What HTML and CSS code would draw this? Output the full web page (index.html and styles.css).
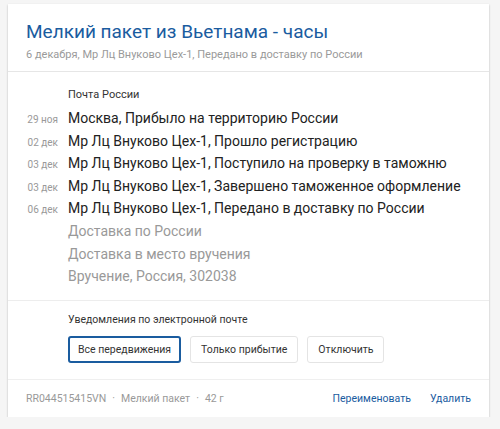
FILE: index.html
```html
<!DOCTYPE html>
<html lang="ru">
<head>
<meta charset="utf-8">
<link rel="stylesheet" href="styles.css">
</head>
<body>
<div class="card">
  <header class="head">
    <h1 class="title">Мелкий пакет из Вьетнама - часы</h1>
    <div class="sub">6 декабря, Мр Лц Внуково Цех-1, Передано в доставку по России</div>
  </header>
  <section class="track">
    <div class="carrier">Почта России</div>
    <ul class="events">
      <li class="ev"><span class="date">29 ноя</span><span class="txt">Москва, Прибыло на территорию России</span></li>
      <li class="ev"><span class="date">02 дек</span><span class="txt">Мр Лц Внуково Цех-1, Прошло регистрацию</span></li>
      <li class="ev"><span class="date">03 дек</span><span class="txt">Мр Лц Внуково Цех-1, Поступило на проверку в таможню</span></li>
      <li class="ev"><span class="date">03 дек</span><span class="txt">Мр Лц Внуково Цех-1, Завершено таможенное оформление</span></li>
      <li class="ev"><span class="date">06 дек</span><span class="txt">Мр Лц Внуково Цех-1, Передано в доставку по России</span></li>
      <li class="ev future"><span class="date"></span><span class="txt">Доставка по России</span></li>
      <li class="ev future"><span class="date"></span><span class="txt">Доставка в место вручения</span></li>
      <li class="ev future"><span class="date"></span><span class="txt">Вручение, Россия, 302038</span></li>
    </ul>
  </section>
  <section class="notify">
    <div class="nlabel">Уведомления по электронной почте</div>
    <div class="btns">
      <button class="btn active">Все передвижения</button>
      <button class="btn">Только прибытие</button>
      <button class="btn">Отключить</button>
    </div>
  </section>
  <footer class="foot">
    <div class="meta">RR044515415VN<span class="dot">·</span>Мелкий пакет<span class="dot">·</span>42 г</div>
    <div class="actions">
      <a class="link">Переименовать</a>
      <a class="link">Удалить</a>
    </div>
  </footer>
</div>
</body>
</html>
```
FILE: styles.css
```css
* { box-sizing: border-box; }
html, body { margin: 0; padding: 0; }
body {
  background: #f5f5f5;
  font-family: Roboto, "Noto Sans", sans-serif;
  padding: 4px 11px 0 8px;
}
.card {
  background: #fff;
  width: 481px;
  height: 413px;
  box-shadow: 0 1px 2px rgba(0,0,0,0.25);
  display: flex;
  flex-direction: column;
}
.head {
  padding: 16px 18px 0 18px;
  height: 68px;
  border-bottom: 1px solid #e6e6e6;
}
.title {
  margin: 0;
  font-size: 19px;
  font-weight: 400;
  color: #1a5c9f;
  line-height: 24px;
}
.sub {
  font-size: 11px;
  color: #9a9a9a;
  line-height: 14px;
  margin-top: 4px;
}
.track {
  padding: 16px 0 0 0;
  height: 229px;
  border-bottom: 1px solid #ededed;
}
.carrier {
  padding-left: 60px;
  font-size: 11px;
  color: #333;
  line-height: 14px;
  margin-bottom: 5px;
}
.events { list-style: none; margin: 0; padding: 0; }
.ev {
  display: flex;
  align-items: baseline;
  height: 22.6px;
  line-height: 22.6px;
}
.date {
  width: 50px;
  text-align: right;
  font-size: 10px;
  color: #999;
  margin-right: 10px;
}
.txt {
  font-size: 14px;
  color: #222;
}
.future .txt { color: #999; }
.notify {
  padding: 12px 0 0 60px;
  height: 79px;
  border-bottom: 1px solid #efefef;
}
.nlabel {
  font-size: 10.5px;
  color: #333;
  line-height: 14px;
  margin-bottom: 9px;
}
.btns { display: flex; gap: 9px; }
.btn {
  font-family: inherit;
  font-size: 10.5px;
  color: #333;
  background: #fff;
  border: 1px solid #e4e4e4;
  border-radius: 3px;
  height: 27px;
  padding: 0 10px;
  cursor: pointer;
}
.btn.active {
  border: 2px solid #1a5c9f;
  padding: 0 8px;
}
.foot {
  flex: 1;
  display: flex;
  align-items: center;
  justify-content: space-between;
  padding: 0 18px 0 18px;
  font-size: 10.5px;
}
.meta { color: #999; }
.dot { margin: 0 6px; }
.actions { display: flex; gap: 19px; }
.link { color: #1a5c9f; cursor: pointer; }
```
